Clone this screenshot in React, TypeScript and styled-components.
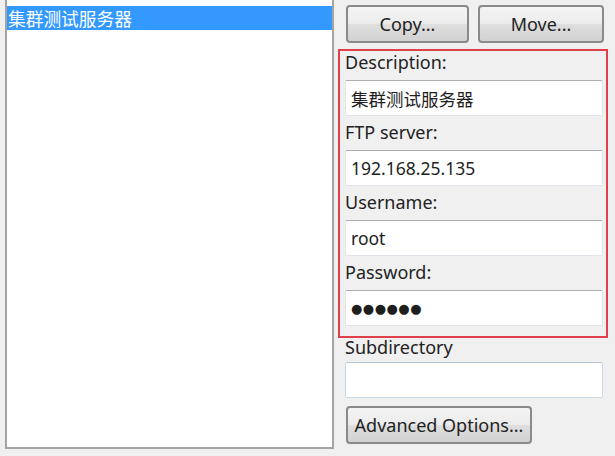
import React from 'react';
import styled, { createGlobalStyle } from 'styled-components';

const GlobalStyle = createGlobalStyle`
	html, body {
		margin: 0;
		padding: 0;
		background: #f0f0f0;
	}
	body {
		font-family: 'Noto Sans', 'Noto Sans CJK SC', sans-serif;
		color: #1e1e1e;
	}
`;

const fields = [
	{ label: 'Description:', value: '集群测试服务器', first: true },
	{ label: 'FTP server:', value: '192.168.25.135' },
	{ label: 'Username:', value: 'root' },
	{ label: 'Password:', value: '●●●●●●', secret: true },
];

const App = () => {
	return (
		<>
			<GlobalStyle />
			<Window>
				<SiteList>
					<SiteItem $selected>集群测试服务器</SiteItem>
				</SiteList>
				<Panel>
					<ButtonRow>
						<PushButton $width={123}>Copy...</PushButton>
						<PushButton $width={126}>Move...</PushButton>
					</ButtonRow>
					<Highlight>
						{fields.map((f) => (
							<div key={f.label}>
								<FieldLabel $height={f.first ? 29 : 34}>{f.label}</FieldLabel>
								<TextBox $secret={f.secret}>{f.value}</TextBox>
							</div>
						))}
					</Highlight>
					<FieldLabel $height={24} $pad={5}>
						Subdirectory
					</FieldLabel>
					<TextBox $soft />
					<PushButton $width={186} $top={8}>
						Advanced Options...
					</PushButton>
				</Panel>
			</Window>
		</>
	);
};

export default App;

const Window = styled.div`
	display: flex;
	align-items: flex-start;
	padding-left: 5px;
	width: 615px;
	height: 456px;
	box-sizing: border-box;
	overflow: hidden;
`;

const SiteList = styled.div`
	width: 329px;
	height: 449px;
	box-sizing: border-box;
	background: #fff;
	border: 2px solid #a3a3a3;
	border-top: none;
	padding-top: 6px;
	flex-shrink: 0;
`;

const SiteItem = styled.div<{ $selected?: boolean }>`
	height: 24px;
	line-height: 24px;
	padding-left: 1px;
	font-size: 17.7px;
	font-family: 'Noto Sans CJK SC', 'Noto Sans', sans-serif;
	background: ${(p) => (p.$selected ? '#3399ff' : 'transparent')};
	color: ${(p) => (p.$selected ? '#fff' : '#1e1e1e')};
`;

const Panel = styled.div`
	display: flex;
	flex-direction: column;
	align-items: flex-start;
	margin-left: 4px;
	padding-top: 5px;
	width: 270px;
`;

const ButtonRow = styled.div`
	display: flex;
	gap: 9px;
	padding-left: 8px;
	margin-bottom: 6px;
`;

const PushButton = styled.button<{ $width: number; $top?: number }>`
	width: ${(p) => p.$width}px;
	height: 38px;
	margin-top: ${(p) => p.$top || 0}px;
	margin-left: ${(p) => (p.$top ? 8 : 0)}px;
	box-sizing: border-box;
	border: 2px solid #8a8a8a;
	border-radius: 4px;
	background: linear-gradient(#f4f4f4 0%, #ececec 48%, #dedede 52%, #d2d2d2 100%);
	font-family: 'Noto Sans', sans-serif;
	font-size: 18px;
	color: #222;
	padding: 0;
	cursor: pointer;
`;

const Highlight = styled.div`
	width: 270px;
	box-sizing: border-box;
	border: 2px solid #e0404a;
	padding: 0 3px 10px 5px;
`;

const FieldLabel = styled.div<{ $height: number; $pad?: number }>`
	height: ${(p) => p.$height}px;
	margin-left: ${(p) => (p.$pad ? 7 : 0)}px;
	display: flex;
	align-items: flex-end;
	line-height: 20px;
	padding-bottom: ${(p) => p.$pad ?? 8}px;
	box-sizing: border-box;
	font-size: 18px;
	color: #222;
`;

const TextBox = styled.div<{ $secret?: boolean; $soft?: boolean }>`
	width: 258px;
	margin-left: ${(p) => (p.$soft ? 7 : 0)}px;
	height: 36px;
	box-sizing: border-box;
	background: #fff;
	border: 1px solid ${(p) => (p.$soft ? '#c9d8e8' : '#e2e3ea')};
	border-top-color: ${(p) => (p.$soft ? '#b8c8da' : '#abadb3')};
	border-radius: 2px;
	padding-left: 5px;
	display: flex;
	align-items: center;
	font-family: ${(p) => (p.$secret ? "'DejaVu Sans', sans-serif" : "'Noto Sans', 'Noto Sans CJK SC', sans-serif")};
	font-size: ${(p) => (p.$secret ? 13 : 17.5)}px;
	letter-spacing: ${(p) => (p.$secret ? 0.5 : 0)}px;
	color: #1e1e1e;
`;
